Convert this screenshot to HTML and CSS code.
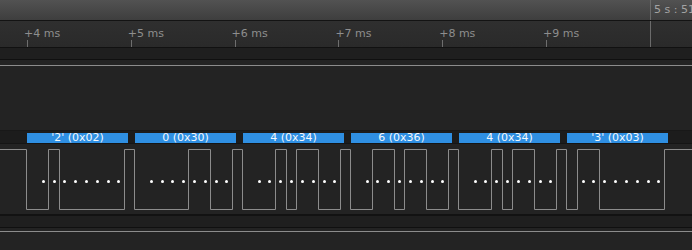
FILE: index.html
```html
<!DOCTYPE html>
<html lang="en">
<head>
    <meta charset="UTF-8">
    <meta name="viewport" content="width=device-width, initial-scale=1.0">
    <title>Logic capture</title>
    <link rel="stylesheet" href="styles.css">
</head>
<body>
    <div class="header">
        <div class="stamp">5 s : 51</div>
    </div>

    <div class="ruler">
        <div class="step"><span class="label">+4 ms</span><span class="tick"></span></div>
        <div class="step"><span class="label">+5 ms</span><span class="tick"></span></div>
        <div class="step"><span class="label">+6 ms</span><span class="tick"></span></div>
        <div class="step"><span class="label">+7 ms</span><span class="tick"></span></div>
        <div class="step"><span class="label">+8 ms</span><span class="tick"></span></div>
        <div class="step"><span class="label">+9 ms</span><span class="tick"></span></div>
        <div class="step now"></div>
    </div>

    <div class="gap"></div>

    <!-- channel 0: idle high -->
    <div class="channel flat"><div class="trace"></div></div>

    <!-- async serial decoder -->
    <div class="decoder">
        <div class="frame">'2' (0x02)</div>
        <div class="frame">0 (0x30)</div>
        <div class="frame">4 (0x34)</div>
        <div class="frame">6 (0x36)</div>
        <div class="frame">4 (0x34)</div>
        <div class="frame">'3' (0x03)</div>
    </div>

    <!-- channel 1: serial data -->
    <div class="channel serial">
        <svg width="692" height="70" viewBox="0 0 692 70">
            <path class="wave" d="M0 5.5 H26.5 V65.5 H48.5 V5.5 H59.5 V65.5 H124.5 V5.5 H134.5 V65.5 H188.5 V5.5 H210.5 V65.5 H232.5 V5.5 H242.5 V65.5 H275.5 V5.5 H286.5 V65.5 H296.5 V5.5 H318.5 V65.5 H340.5 V5.5 H350.5 V65.5 H372.5 V5.5 H394.5 V65.5 H404.5 V5.5 H426.5 V65.5 H448.5 V5.5 H458.5 V65.5 H491.5 V5.5 H502.5 V65.5 H512.5 V5.5 H534.5 V65.5 H556.5 V5.5 H566.5 V65.5 H577.5 V5.5 H599.5 V65.5 H664.5 V5.5 H692"/>
            <g class="bits">
                <circle cx="43.5" cy="37.5" r="1.5"/><circle cx="54.5" cy="37.5" r="1.5"/><circle cx="64.5" cy="37.5" r="1.5"/><circle cx="75.5" cy="37.5" r="1.5"/>
                <circle cx="86.5" cy="37.5" r="1.5"/><circle cx="97.5" cy="37.5" r="1.5"/><circle cx="108.5" cy="37.5" r="1.5"/><circle cx="118.5" cy="37.5" r="1.5"/>
                <circle cx="151.5" cy="37.5" r="1.5"/><circle cx="162.5" cy="37.5" r="1.5"/><circle cx="172.5" cy="37.5" r="1.5"/><circle cx="183.5" cy="37.5" r="1.5"/>
                <circle cx="194.5" cy="37.5" r="1.5"/><circle cx="205.5" cy="37.5" r="1.5"/><circle cx="216.5" cy="37.5" r="1.5"/><circle cx="226.5" cy="37.5" r="1.5"/>
                <circle cx="259.5" cy="37.5" r="1.5"/><circle cx="269.5" cy="37.5" r="1.5"/><circle cx="280.5" cy="37.5" r="1.5"/><circle cx="291.5" cy="37.5" r="1.5"/>
                <circle cx="302.5" cy="37.5" r="1.5"/><circle cx="313.5" cy="37.5" r="1.5"/><circle cx="324.5" cy="37.5" r="1.5"/><circle cx="334.5" cy="37.5" r="1.5"/>
                <circle cx="367.5" cy="37.5" r="1.5"/><circle cx="377.5" cy="37.5" r="1.5"/><circle cx="388.5" cy="37.5" r="1.5"/><circle cx="399.5" cy="37.5" r="1.5"/>
                <circle cx="410.5" cy="37.5" r="1.5"/><circle cx="421.5" cy="37.5" r="1.5"/><circle cx="432.5" cy="37.5" r="1.5"/><circle cx="442.5" cy="37.5" r="1.5"/>
                <circle cx="475.5" cy="37.5" r="1.5"/><circle cx="485.5" cy="37.5" r="1.5"/><circle cx="496.5" cy="37.5" r="1.5"/><circle cx="507.5" cy="37.5" r="1.5"/>
                <circle cx="518.5" cy="37.5" r="1.5"/><circle cx="529.5" cy="37.5" r="1.5"/><circle cx="540.5" cy="37.5" r="1.5"/><circle cx="550.5" cy="37.5" r="1.5"/>
                <circle cx="583.5" cy="37.5" r="1.5"/><circle cx="593.5" cy="37.5" r="1.5"/><circle cx="604.5" cy="37.5" r="1.5"/><circle cx="615.5" cy="37.5" r="1.5"/>
                <circle cx="626.5" cy="37.5" r="1.5"/><circle cx="637.5" cy="37.5" r="1.5"/><circle cx="648.5" cy="37.5" r="1.5"/><circle cx="658.5" cy="37.5" r="1.5"/>
            </g>
        </svg>
    </div>

    <div class="gap low"></div>

    <!-- channel 2: idle high -->
    <div class="channel flat last"><div class="trace"></div></div>
</body>
</html>
```

FILE: styles.css
```css
* {
    box-sizing: border-box;
}
body {
    margin: 0;
    width: 692px;
    height: 250px;
    overflow: hidden;
    background: #232323;
    font-family: "DejaVu Sans", Verdana, sans-serif;
}
.header {
    display: flex;
    height: 21px;
    overflow: hidden;
    background: linear-gradient(#525252, #3e3e3e);
    border-bottom: 1px solid #131313;
}
.stamp {
    margin-left: 650px;
    padding-left: 3px;
    border-left: 1px solid #6b6b6b;
    color: #a3a3a3;
    font-size: 11px;
    line-height: 20px;
    white-space: nowrap;
}
.ruler {
    display: flex;
    height: 27px;
    padding-left: 27px;
    overflow: hidden;
    background: linear-gradient(#2f2f2f, #2a2a2a);
    border-bottom: 1px solid #111;
}
.step {
    flex: none;
    width: 103.8px;
    display: flex;
    flex-direction: column;
}
.label {
    margin-left: -3px;
    padding-top: 6px;
    color: #8e8e8e;
    font-size: 11px;
    line-height: 13px;
    white-space: nowrap;
}
.tick {
    width: 1px;
    height: 7px;
    margin-top: auto;
    background: #6e6e6e;
}
.now {
    border-left: 1px solid #6b6b6b;
}
.gap {
    height: 12px;
    background: #1f1f1f;
    border-bottom: 1px solid #101010;
}
.gap.low {
    height: 14px;
    border-top: 2px solid #121212;
}
.channel.flat {
    height: 71px;
    padding-top: 5px;
    border-bottom: 1px solid #181818;
}
.channel.last {
    height: auto;
    padding-top: 3px;
    border-bottom: none;
}
.trace {
    height: 1px;
    background: #8c8c8c;
}
.decoder {
    display: flex;
    gap: 7px;
    height: 13px;
    padding: 2px 0 0 27px;
    background: #1c1c1c;
    border-bottom: 1px solid #151515;
}
.frame {
    flex: none;
    width: 101px;
    height: 10px;
    background: #2f8fe2;
    color: #f4f8fc;
    font-size: 11px;
    line-height: 10px;
    text-align: center;
    white-space: nowrap;
}
.serial {
    height: 70px;
}
.serial svg {
    display: block;
}
.wave {
    fill: none;
    stroke: #8c8c8c;
    stroke-width: 1;
}
.bits circle {
    fill: #fff;
}
```
